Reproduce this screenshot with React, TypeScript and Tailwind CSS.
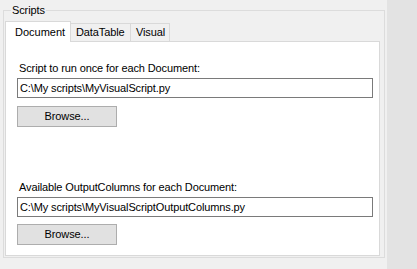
export default function App() {
  const tabs = ["Document", "DataTable", "Visual"]

  return (
    <div className="flex w-[417px] h-[269px] bg-[#f0f0f0] text-[11px] leading-[13px] tracking-[-0.12px] text-black font-['Liberation_Sans',Arial,sans-serif] overflow-hidden">
      <div className="w-[387px] pl-[3px]">
        {/* Group box */}
        <fieldset className="mt-[4px] w-[382px] h-[254px] border border-[#dcdcdc] flex flex-col">
          <legend className="ml-[7px] px-[1px] leading-[12px]">Scripts</legend>

          {/* Tab strip */}
          <div className="mt-[4px] ml-[1px] flex items-end h-[21px]">
            {tabs.map((tab, i) =>
              i === 0 ? (
                <div
                  key={tab}
                  className="relative z-10 w-[66px] h-[21px] -mb-px bg-white border border-b-0 border-[#d9d9d9] pl-[9px] pt-[4px] tracking-normal"
                >
                  {tab}
                </div>
              ) : (
                <div
                  key={tab}
                  className={`h-[18px] border-t border-r border-[#d9d9d9] bg-[#f0f0f0] pt-[2px] ${
                    i === 1 ? "w-[60px] pl-[5px]" : "w-[39px] pl-[5px]"
                  }`}
                >
                  {tab}
                </div>
              )
            )}
          </div>

          {/* Tab page */}
          <div className="ml-[1px] mr-[4px] mb-[1px] flex-1 bg-white border border-[#d9d9d9] pl-[11px] pt-[20px]">
            <div className="pl-[2px]">Script to run once for each Document:</div>
            <div className="mt-[3px] w-[356px] h-[20px] border border-[#7a7a7a] bg-white pl-[2px] flex items-center">
              C:\My scripts\MyVisualScript.py
            </div>
            <button
              type="button"
              className="mt-[8px] w-[100px] h-[21px] border border-[#adadad] bg-[#e1e1e1] flex items-center justify-center"
            >
              Browse...
            </button>

            <div className="mt-[54px] pl-[2px]">Available OutputColumns for each Document:</div>
            <div className="mt-[3px] w-[356px] h-[20px] border border-[#7a7a7a] bg-white pl-[2px] flex items-center">
              C:\My scripts\MyVisualScriptOutputColumns.py
            </div>
            <button
              type="button"
              className="mt-[7px] w-[100px] h-[21px] border border-[#adadad] bg-[#e1e1e1] flex items-center justify-center"
            >
              Browse...
            </button>
          </div>
        </fieldset>
      </div>
      <div className="flex-1 bg-[#e3e3e3]" />
    </div>
  )
}
